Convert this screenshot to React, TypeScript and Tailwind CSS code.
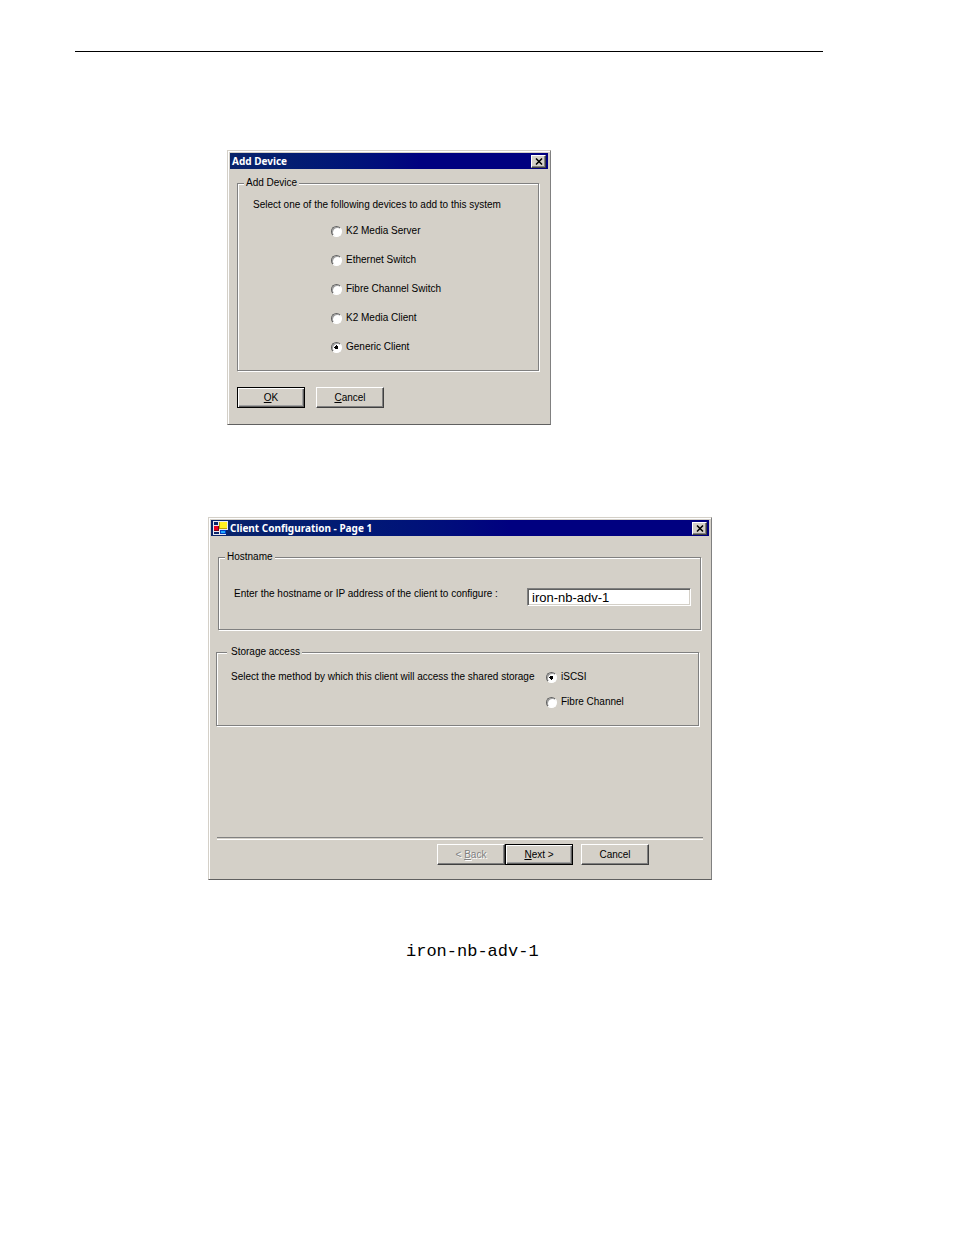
import type { ReactNode } from 'react';
import clsx from 'clsx';

const DEVICES = ['K2 Media Server', 'Ethernet Switch', 'Fibre Channel Switch', 'K2 Media Client', 'Generic Client'];

function FormIcon() {
    return (
        <svg width="15" height="14" viewBox="0 0 15 14" shapeRendering="crispEdges" aria-hidden="true">
            <rect width="15" height="14" fill="#e8e8f0" />
            <rect x="1" y="1" width="4" height="3" fill="#0a246a" />
            <rect x="1" y="5" width="5" height="5" fill="#800010" />
            <rect x="1" y="5" width="4" height="4" fill="#e80020" />
            <rect x="6" y="1" width="8" height="7" fill="#c0a000" />
            <rect x="7" y="1" width="7" height="6" fill="#ffee20" />
            <rect x="1" y="11" width="5" height="2" fill="#0a246a" />
            <rect x="7" y="9" width="6" height="4" fill="#0040c0" />
            <rect x="8" y="10" width="4" height="2" fill="#20a8ff" />
            <rect x="13" y="9" width="2" height="5" fill="#0a246a" />
        </svg>
    );
}

function Dialog({ title, icon, className, children }: { title: string; icon?: ReactNode; className?: string; children: ReactNode }) {
    return (
        <section
            aria-label={title}
            className={clsx(
                'max-w-full bg-[#d4d0c8] border border-t-[#d4d0c8] border-l-[#d4d0c8] border-r-[#808080] border-b-[#606060] shadow-[inset_1px_1px_0_#fff] p-0.5 text-[10px] leading-4 text-black',
                className,
            )}
        >
            <header className="flex items-center h-4 px-0.5 gap-0.5 bg-linear-to-r from-[#0a246a] to-[#000080] to-60% text-white">
                {icon}
                <h2 className="grow font-['Noto_Sans',sans-serif] font-bold">{title}</h2>
                <button
                    type="button"
                    aria-label="Close"
                    className="flex items-center justify-center w-[15px] h-[13px] bg-[#d4d0c8] border border-t-white border-l-white border-r-[#404040] border-b-[#404040] shadow-[inset_-1px_-1px_0_#808080]"
                >
                    <svg width="8" height="7" viewBox="0 0 8 7" stroke="#000" strokeWidth="1.5" aria-hidden="true">
                        <path d="M1 0.5 7 6.5M7 0.5 1 6.5" />
                    </svg>
                </button>
            </header>
            {children}
        </section>
    );
}

function Group({ label, className, legendClass, children }: { label: string; className?: string; legendClass?: string; children: ReactNode }) {
    return (
        <fieldset className={clsx('border border-[#808080] shadow-[inset_1px_1px_0_#fff,1px_1px_0_#fff]', className)}>
            <legend className={clsx('bg-[#d4d0c8]', legendClass)}>{label}</legend>
            {children}
        </fieldset>
    );
}

function Radio({ name, label, checked }: { name: string; label: string; checked?: boolean }) {
    return (
        <label className="flex items-center gap-1">
            <input
                type="radio"
                name={name}
                defaultChecked={checked}
                className="appearance-none size-[11px] rounded-full bg-white border border-t-[#606060] border-l-[#606060] border-r-white border-b-white shadow-[inset_1px_1px_0_#a0a0a0] checked:bg-[radial-gradient(circle,#000_2px,#fff_2px)]"
            />
            {label}
        </label>
    );
}

function PushButton({ isDefault, disabled, children }: { isDefault?: boolean; disabled?: boolean; children: ReactNode }) {
    return (
        <button
            type="button"
            disabled={disabled}
            className={clsx(
                'w-[68px] h-[21px] border bg-[#d4d0c8]',
                isDefault
                    ? 'border-black shadow-[inset_1px_1px_0_#fff,inset_-1px_-1px_0_#606060,inset_-2px_-2px_0_#a0a0a0]'
                    : 'border-t-white border-l-white border-r-[#404040] border-b-[#404040] shadow-[inset_-1px_-1px_0_#808080]',
                disabled && 'text-[#808080] [text-shadow:1px_1px_0_#fff]',
            )}
        >
            {children}
        </button>
    );
}

export default function App() {
    return (
        <main className="min-h-screen bg-white pl-[75px] pr-[131px] pt-[51px] pb-16 font-['Liberation_Sans',Arial,sans-serif]">
            <hr className="border-t border-black" />

            <Dialog title="Add Device" className="w-[324px] ml-[152px] mt-[98px]">
                <div className="px-[7px] pt-1.5 pb-3.5">
                    <Group label="Add Device" className="mr-0.5 pl-[15px] pb-[15px]" legendClass="-ml-[9px] px-0.5">
                        <p className="pt-1.5">Select one of the following devices to add to this system</p>
                        <div className="flex flex-col gap-[13px] pl-[78px] pt-2.5">
                            {DEVICES.map((device) => (
                                <Radio key={device} name="device" label={device} checked={device === 'Generic Client'} />
                            ))}
                        </div>
                    </Group>
                    <div className="flex gap-[11px] pt-4">
                        <PushButton isDefault>
                            <u>O</u>K
                        </PushButton>
                        <PushButton>
                            <u>C</u>ancel
                        </PushButton>
                    </div>
                </div>
            </Dialog>

            <Dialog title="Client Configuration - Page 1" icon={<FormIcon />} className="w-[504px] ml-[133px] mt-[92px]">
                <div className="pl-[5px] pr-1.5 pt-[13px] pb-3">
                    <Group label="Hostname" className="ml-0.5 mr-0.5 pl-[15px] pr-[9px] pb-[23px]" legendClass="-ml-[9px] px-0.5">
                        <div className="flex justify-between pt-[21px]">
                            <label htmlFor="hostname">Enter the hostname or IP address of the client to configure :</label>
                            <input
                                id="hostname"
                                type="text"
                                defaultValue="iron-nb-adv-1"
                                className="w-[164px] h-[18px] mt-0.5 px-1 text-[13px] bg-white border border-t-[#808080] border-l-[#808080] border-r-white border-b-white shadow-[inset_1px_1px_0_#606060,inset_-1px_-1px_0_#d4d0c8]"
                            />
                        </div>
                    </Group>
                    <Group label="Storage access" className="mt-3.5 mr-1 pl-3.5 pb-[15px]" legendClass="-ml-1 pl-1 pr-0.5">
                        <div className="flex pt-[9px]">
                            <p className="grow">Select the method by which this client will access the shared storage</p>
                            <div className="flex flex-col shrink-0 gap-[9px] w-[152px]">
                                <Radio name="access" label="iSCSI" checked />
                                <Radio name="access" label="Fibre Channel" />
                            </div>
                        </div>
                    </Group>
                    <hr className="mt-[111px] ml-px border-t border-[#808080] shadow-[0_2px_0_#fff]" />
                    <div className="flex justify-end pt-1.5 pr-[54px]">
                        <PushButton disabled>
                            &lt; <u>B</u>ack
                        </PushButton>
                        <PushButton isDefault>
                            <u>N</u>ext &gt;
                        </PushButton>
                        <div className="pl-2">
                            <PushButton>Cancel</PushButton>
                        </div>
                    </div>
                </div>
            </Dialog>

            <p className="mt-[60px] pl-[331px] font-['Liberation_Mono',monospace] text-[17px] leading-6 text-black">iron-nb-adv-1</p>
        </main>
    );
}
